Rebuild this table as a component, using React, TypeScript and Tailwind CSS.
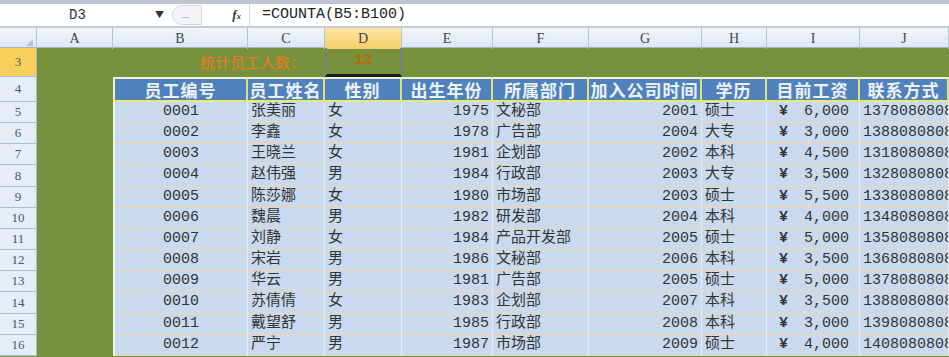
const cols = "grid grid-cols-[37px_76px_135px_77px_77px_91px_96px_113px_65px_93px_89px]";

const letters = ["A", "B", "C", "D", "E", "F", "G", "H", "I", "J"];

const heads = ["员工编号", "员工姓名", "性别", "出生年份", "所属部门", "加入公司时间", "学历", "目前工资", "联系方式"];

const rows = [
    ["0001", "张美丽", "女", "1975", "文秘部", "2001", "硕士", "6,000", "13780808080"],
    ["0002", "李鑫", "女", "1978", "广告部", "2004", "大专", "3,000", "13880808080"],
    ["0003", "王晓兰", "女", "1981", "企划部", "2002", "本科", "4,500", "13180808080"],
    ["0004", "赵伟强", "男", "1984", "行政部", "2003", "大专", "3,500", "13280808080"],
    ["0005", "陈莎娜", "女", "1980", "市场部", "2003", "硕士", "5,500", "13380808080"],
    ["0006", "魏晨", "男", "1982", "研发部", "2004", "本科", "4,000", "13480808080"],
    ["0007", "刘静", "女", "1984", "产品开发部", "2005", "硕士", "5,000", "13580808080"],
    ["0008", "宋岩", "男", "1986", "文秘部", "2006", "本科", "3,500", "13680808080"],
    ["0009", "华云", "男", "1981", "广告部", "2005", "硕士", "5,000", "13780808080"],
    ["0010", "苏倩倩", "女", "1983", "企划部", "2007", "本科", "3,500", "13880808080"],
    ["0011", "戴望舒", "男", "1985", "行政部", "2008", "本科", "3,000", "13980808080"],
    ["0012", "严宁", "男", "1987", "市场部", "2009", "硕士", "4,000", "14080808080"],
];

const mono = "font-['Liberation_Mono','Noto_Sans_CJK_SC',monospace]";

const RowLabel = ({ n, active }: { n: number; active?: boolean }) => (
    <div
        className={`flex items-center justify-center border-b border-r border-[#a9bcd4] text-[13px] text-[#4a5566] font-['Liberation_Serif',serif] ${active ? "bg-[#f7cf5c]" : "bg-[#e6edf7]"
            }`}
    >
        {n}
    </div>
);

export default function App() {
    return (
        <div className="w-[949px] h-[357px] overflow-hidden bg-[#76923c] font-['Noto_Sans_CJK_SC',sans-serif]">
            {/* formula bar */}
            <div className="h-[4px] bg-[#bcc5d2]" />
            <div className="h-[24px] bg-white flex items-center border-b-2 border-[#c4ccd8]">
                <div className="w-[172px] h-full flex items-center">
                    <span className={`flex-1 text-center text-[14px] text-[#333] ${mono}`}>D3</span>
                    <span className="text-[9px] text-[#333] pr-2">▼</span>
                </div>
                <div className="w-[78px] h-full flex items-center justify-between border-r border-[#d4d9e0] pr-2">
                    <div className="w-[30px] h-[20px] rounded-l-full border border-[#cfd6e0] bg-[#f3f5f8] flex items-center pl-2 text-[10px] text-[#b0b8c4]">
                        —
                    </div>
                    <span className="italic font-bold text-[13px] text-[#333] font-['Liberation_Serif',serif]">
                        f<span className="text-[9px]">x</span>
                    </span>
                </div>
                <span className={`pl-3 text-[15px] text-[#222] ${mono}`}>=COUNTA(B5:B100)</span>
            </div>

            {/* column headers */}
            <div className={`${cols} h-[20px] bg-gradient-to-b from-[#f3f6fb] to-[#dde6f2] border-b border-[#9fb3cc]`}>
                <div className="border-r border-[#b5c5d9] flex items-end justify-end pr-[3px] pb-[3px]">
                    <div className="w-0 h-0 border-l-[7px] border-l-transparent border-b-[7px] border-b-[#b7c2d0]" />
                </div>
                {letters.map((l) => (
                    <div
                        key={l}
                        className={`flex items-center justify-center border-r border-[#b5c5d9] text-[14px] text-[#3d4654] font-['Liberation_Serif',serif] ${l === "D" ? "bg-gradient-to-b from-[#fbe4a0] to-[#f7cf6a]" : ""
                            }`}
                    >
                        {l}
                    </div>
                ))}
            </div>

            {/* row 3 */}
            <div className={`${cols} h-[29px]`}>
                <RowLabel n={3} active />
                <div />
                <div className="col-span-2 flex items-center justify-end pr-5 text-[15px] text-[#f07b1c]">
                    统计员工人数：
                </div>
                <div className={`flex items-center justify-center border-x-2 border-[#7d7d7d] border-b-[3px] border-b-[#1b1b1b] text-[15px] font-bold text-[#b8680f] ${mono}`}>
                    12
                </div>
                <div className="col-span-6" />
            </div>

            {/* row 4: table header */}
            <div className={`${cols} h-[25px]`}>
                <RowLabel n={4} />
                <div />
                {heads.map((h, i) => (
                    <div
                        key={h}
                        className={`flex items-center justify-center bg-[#4f81bd] border-t-2 border-t-[#eef3d8] border-b-2 border-b-[#e8ec6c] border-r-2 border-r-[#dfe47a] text-[17px] font-bold text-white/90 tracking-[1px] whitespace-nowrap overflow-hidden ${i === 0 ? "border-l-2 border-l-[#eef3d8]" : ""
                            }`}
                    >
                        {h}
                    </div>
                ))}
            </div>

            {/* data rows */}
            {rows.map((r, idx) => (
                <div key={r[0]} className={`${cols} ${idx % 6 === 3 ? "h-[22px]" : "h-[21px]"}`}>
                    <RowLabel n={idx + 5} />
                    <div />
                    {r.map((v, i) => {
                        const base = `flex items-center bg-[#c9daef] border-b border-b-[#f4d2ab] border-r border-r-[#e3ebf5] text-[15px] text-[#333] whitespace-nowrap overflow-hidden ${mono} ${i === 0 ? "border-l-2 border-l-[#eef3f8]" : ""}`;
                        if (i === 0) return <div key={i} className={`${base} justify-center`}>{v}</div>;
                        if (i === 3 || i === 5) return <div key={i} className={`${base} justify-end pr-[3px]`}>{v}</div>;
                        if (i === 7)
                            return (
                                <div key={i} className={`${base} justify-between pl-3 pr-[10px]`}>
                                    <span className="font-bold">¥</span>
                                    <span>{v}</span>
                                </div>
                            );
                        return <div key={i} className={`${base} pl-[3px]`}>{v}</div>;
                    })}
                </div>
            ))}
        </div>
    );
}
